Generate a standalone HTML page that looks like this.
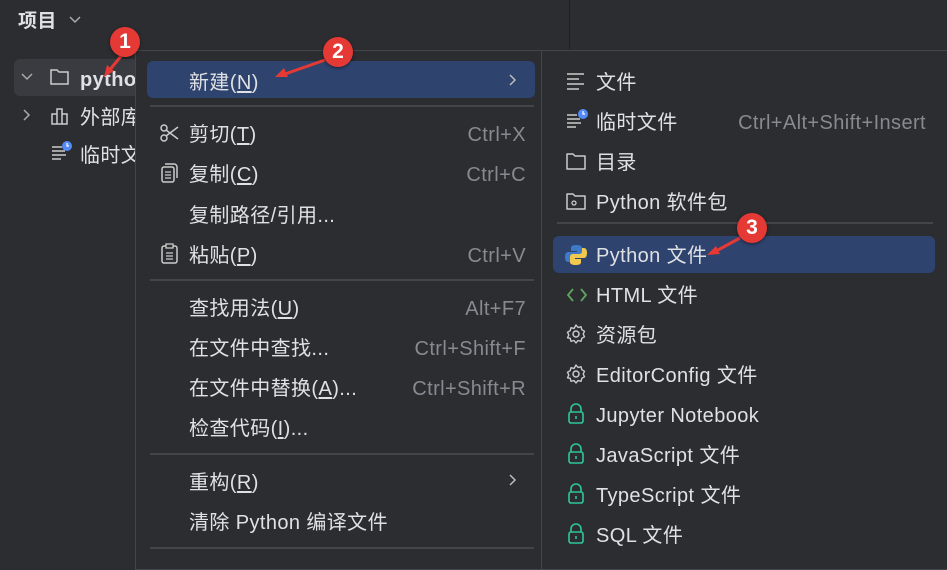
<!DOCTYPE html>
<html><head><meta charset="utf-8"><style>
*{margin:0;padding:0;box-sizing:border-box}
body{width:947px;height:560px;background:#2b2d30;font-family:"Liberation Sans","Noto Sans CJK SC",sans-serif;color:#dfe1e5;position:relative;overflow:hidden;font-size:20px;letter-spacing:0.4px}
.a{position:absolute;white-space:nowrap;line-height:24px;margin-top:1px}
.sc{color:#868a91}
.menu{position:absolute;background:#2b2d30;border:1px solid #43454a}
.sep{position:absolute;height:2px;background:#43454a}
.hl{position:absolute;background:#2e436e;border-radius:6px}
u{text-decoration:underline;text-underline-offset:2px}
svg{position:absolute}
.badge{position:absolute;width:30px;height:30px;border-radius:50%;background:#e53935;color:#fff;font-weight:bold;font-size:21px;text-align:center;line-height:30px;box-shadow:0 1px 3px rgba(0,0,0,.5);letter-spacing:0}
</style></head><body>
<div style="position:absolute;left:569px;top:0;width:1px;height:50px;background:#1e1f22"></div>
<div class="a" style="left:18px;top:9px;font-weight:bold;font-size:19px">项目</div>
<svg style="left:68px;top:15px" width="14" height="10"><path d="M2 2l5 5 5-5" stroke="#aaa" stroke-width="1.5" fill="none"/></svg>
<div style="position:absolute;left:14px;top:59px;width:130px;height:37px;background:#393b40;border-radius:6px"></div>
<svg style="left:20px;top:72px" width="14" height="10"><path d="M2 2l5 5 5-5" stroke="#aaa" stroke-width="1.5" fill="none"/></svg>
<svg style="left:49px;top:67px" width="22" height="20"><path d="M2 3h6l2 2h9v12H2z" stroke="#ccc" stroke-width="1.5" fill="none"/></svg>
<div class="a" style="left:80px;top:67px;font-weight:bold">pytho</div>
<svg style="left:22px;top:108px" width="10" height="14"><path d="M2 2l5 5-5 5" stroke="#aaa" stroke-width="1.5" fill="none"/></svg>
<svg style="left:50px;top:106px" width="22" height="20"><path d="M2 8h5v10H2zM7 3h5v15H7zM12 8h5v10h-5z" stroke="#ccc" stroke-width="1.5" fill="none"/></svg>
<div class="a" style="left:80px;top:105px">外部库</div>
<svg style="left:50px;top:140px" width="24" height="22"><path d="M2 7h10M2 11h13M2 15h14M2 19h9" stroke="#ccc" stroke-width="1.5"/><circle cx="17" cy="6" r="5" fill="#548af7"/><path d="M17 3v3h2" stroke="#fff" stroke-width="1.2" fill="none"/></svg>
<div class="a" style="left:80px;top:143px">临时文</div>

<div class="menu" style="left:135px;top:50px;width:407px;height:520px"></div>
<div class="hl" style="left:147px;top:61px;width:388px;height:37px"></div>
<div class="sep" style="left:150px;top:105px;width:384px"></div>
<div class="sep" style="left:150px;top:279px;width:384px"></div>
<div class="sep" style="left:150px;top:453px;width:384px"></div>
<div class="sep" style="left:150px;top:547px;width:384px"></div>
<div class="a" style="left:189px;top:70px">新建(<u>N</u>)</div>
<svg style="left:508px;top:73px" width="10" height="14"><path d="M2 2l5 5-5 5" stroke="#bbb" stroke-width="1.5" fill="none"/></svg>
<svg style="left:159px;top:123px" width="22" height="20"><circle cx="5" cy="5" r="3" stroke="#ccc" stroke-width="1.5" fill="none"/><circle cx="5" cy="15" r="3" stroke="#ccc" stroke-width="1.5" fill="none"/><path d="M7 7l12 9M7 13l12-9" stroke="#ccc" stroke-width="1.5"/></svg>
<div class="a" style="left:189px;top:122px">剪切(<u>T</u>)</div><div class="a sc" style="right:421px;top:122px">Ctrl+X</div>
<svg style="left:159px;top:162px" width="22" height="22"><rect x="3" y="5" width="12" height="15" rx="2" stroke="#ccc" stroke-width="1.5" fill="none"/><path d="M6 2h9a3 3 0 0 1 3 3v11" stroke="#ccc" stroke-width="1.5" fill="none"/><path d="M6 10h6M6 13h6M6 16h6" stroke="#ccc" stroke-width="1.2"/></svg>
<div class="a" style="left:189px;top:162px">复制(<u>C</u>)</div><div class="a sc" style="right:421px;top:162px">Ctrl+C</div>
<div class="a" style="left:189px;top:203px">复制路径/引用...</div>
<svg style="left:159px;top:242px" width="22" height="22"><rect x="3" y="4" width="15" height="17" rx="2" stroke="#ccc" stroke-width="1.5" fill="none"/><rect x="7" y="2" width="7" height="4" stroke="#ccc" stroke-width="1.3" fill="#2b2d30"/><path d="M7 11h7M7 14h7M7 17h7" stroke="#ccc" stroke-width="1.2"/></svg>
<div class="a" style="left:189px;top:243px">粘贴(<u>P</u>)</div><div class="a sc" style="right:421px;top:243px">Ctrl+V</div>
<div class="a" style="left:189px;top:296px">查找用法(<u>U</u>)</div><div class="a sc" style="right:421px;top:296px">Alt+F7</div>
<div class="a" style="left:189px;top:336px">在文件中查找...</div><div class="a sc" style="right:421px;top:336px">Ctrl+Shift+F</div>
<div class="a" style="left:189px;top:376px">在文件中替换(<u>A</u>)...</div><div class="a sc" style="right:421px;top:376px">Ctrl+Shift+R</div>
<div class="a" style="left:189px;top:416px">检查代码(<u>I</u>)...</div>
<div class="a" style="left:189px;top:470px">重构(<u>R</u>)</div>
<svg style="left:508px;top:473px" width="10" height="14"><path d="M2 2l5 5-5 5" stroke="#bbb" stroke-width="1.5" fill="none"/></svg>
<div class="a" style="left:189px;top:510px">清除 Python 编译文件</div>

<div class="menu" style="left:541px;top:50px;width:410px;height:520px"></div>
<div class="sep" style="left:557px;top:222px;width:376px"></div>
<div class="hl" style="left:553px;top:236px;width:382px;height:37px"></div>
<svg style="left:566px;top:71px" width="22" height="20"><path d="M1 3h17M1 8h12M1 13h17M1 18h12" stroke="#ccc" stroke-width="1.5"/></svg>
<div class="a" style="left:596px;top:70px">文件</div>
<svg style="left:566px;top:108px" width="24" height="22"><path d="M1 7h10M1 11h13M1 15h14M1 19h9" stroke="#ccc" stroke-width="1.5"/><circle cx="17" cy="6" r="5" fill="#548af7"/><path d="M17 3v3h2" stroke="#fff" stroke-width="1.2" fill="none"/></svg>
<div class="a" style="left:596px;top:110px">临时文件</div><div class="a sc" style="right:21px;top:110px">Ctrl+Alt+Shift+Insert</div>
<svg style="left:565px;top:151px" width="24" height="22"><path d="M2 3h6l2 2h10v13H2z" stroke="#ccc" stroke-width="1.5" fill="none" stroke-linejoin="round"/></svg>
<div class="a" style="left:596px;top:150px">目录</div>
<svg style="left:565px;top:191px" width="24" height="22"><path d="M2 3h6l2 2h10v13H2z" stroke="#ccc" stroke-width="1.5" fill="none" stroke-linejoin="round"/><circle cx="9" cy="12" r="2" stroke="#ccc" stroke-width="1.3" fill="none"/></svg>
<div class="a" style="left:596px;top:190px">Python 软件包</div>
<svg style="left:565px;top:244px" width="22" height="22"><path d="M11 1c-5 0-5 2-5 3v3h6v1H3c-2 0-3 2-3 5s1 5 3 5h2v-3c0-2 1-3 3-3h6c2 0 3-1 3-3V4c0-2-2-3-6-3z" fill="#3e7ac8"/><path d="M11 21c5 0 5-2 5-3v-3h-6v-1h9c2 0 3-2 3-5s-1-5-3-5h-2v3c0 2-1 3-3 3H8c-2 0-3 1-3 3v5c0 2 2 3 6 3z" fill="#f2c94c"/></svg>
<div class="a" style="left:596px;top:243px">Python 文件</div>
<svg style="left:565px;top:285px" width="24" height="20"><path d="M8 4L3 10l5 6M16 4l5 6-5 6" stroke="#5fa55f" stroke-width="1.8" fill="none"/></svg>
<div class="a" style="left:596px;top:283px">HTML 文件</div>
<svg style="left:565px;top:323px" width="22" height="22"><circle cx="11" cy="11" r="3" stroke="#ccc" stroke-width="1.5" fill="none"/><path d="M11 2l2 2.5 3-.8.8 3 2.7 1.5-1.3 2.8 1.3 2.8-2.7 1.5-.8 3-3-.8-2 2.5-2-2.5-3 .8-.8-3L2.5 14.8 3.8 12 2.5 9.2l2.7-1.5.8-3 3 .8z" stroke="#ccc" stroke-width="1.4" fill="none" stroke-linejoin="round"/></svg>
<div class="a" style="left:596px;top:323px">资源包</div>
<svg style="left:565px;top:363px" width="22" height="22"><circle cx="11" cy="11" r="3" stroke="#ccc" stroke-width="1.5" fill="none"/><path d="M11 2l2 2.5 3-.8.8 3 2.7 1.5-1.3 2.8 1.3 2.8-2.7 1.5-.8 3-3-.8-2 2.5-2-2.5-3 .8-.8-3L2.5 14.8 3.8 12 2.5 9.2l2.7-1.5.8-3 3 .8z" stroke="#ccc" stroke-width="1.4" fill="none" stroke-linejoin="round"/></svg>
<div class="a" style="left:596px;top:363px">EditorConfig 文件</div>
<svg style="left:566px;top:403px" width="20" height="22"><path d="M5 9V6a5 5 0 0 1 10 0v3" stroke="#2fc79e" stroke-width="1.6" fill="none"/><rect x="3" y="9" width="14" height="11" rx="2" stroke="#2fc79e" stroke-width="1.6" fill="none"/><path d="M10 13v3" stroke="#2fc79e" stroke-width="1.6"/></svg>
<div class="a" style="left:596px;top:403px">Jupyter Notebook</div>
<svg style="left:566px;top:443px" width="20" height="22"><path d="M5 9V6a5 5 0 0 1 10 0v3" stroke="#2fc79e" stroke-width="1.6" fill="none"/><rect x="3" y="9" width="14" height="11" rx="2" stroke="#2fc79e" stroke-width="1.6" fill="none"/><path d="M10 13v3" stroke="#2fc79e" stroke-width="1.6"/></svg>
<div class="a" style="left:596px;top:443px">JavaScript 文件</div>
<svg style="left:566px;top:483px" width="20" height="22"><path d="M5 9V6a5 5 0 0 1 10 0v3" stroke="#2fc79e" stroke-width="1.6" fill="none"/><rect x="3" y="9" width="14" height="11" rx="2" stroke="#2fc79e" stroke-width="1.6" fill="none"/><path d="M10 13v3" stroke="#2fc79e" stroke-width="1.6"/></svg>
<div class="a" style="left:596px;top:483px">TypeScript 文件</div>
<svg style="left:566px;top:523px" width="20" height="22"><path d="M5 9V6a5 5 0 0 1 10 0v3" stroke="#2fc79e" stroke-width="1.6" fill="none"/><rect x="3" y="9" width="14" height="11" rx="2" stroke="#2fc79e" stroke-width="1.6" fill="none"/><path d="M10 13v3" stroke="#2fc79e" stroke-width="1.6"/></svg>
<div class="a" style="left:596px;top:523px">SQL 文件</div>

<svg style="left:0;top:0" width="947" height="560">
<g stroke="#e53935" stroke-width="3" fill="#e53935">
<line x1="122" y1="55" x2="108" y2="72"/><path d="M104 77l3-12 7 6z" stroke="none"/>
<line x1="325" y1="60" x2="285" y2="74"/><path d="M275 77l9-9 4 9z" stroke="none"/>
<line x1="740" y1="238" x2="718" y2="250"/><path d="M707 255l9-9 4 8z" stroke="none"/>
</g></svg>
<div class="badge" style="left:110px;top:27px">1</div>
<div class="badge" style="left:323px;top:37px">2</div>
<div class="badge" style="left:737px;top:213px">3</div>
</body></html>
